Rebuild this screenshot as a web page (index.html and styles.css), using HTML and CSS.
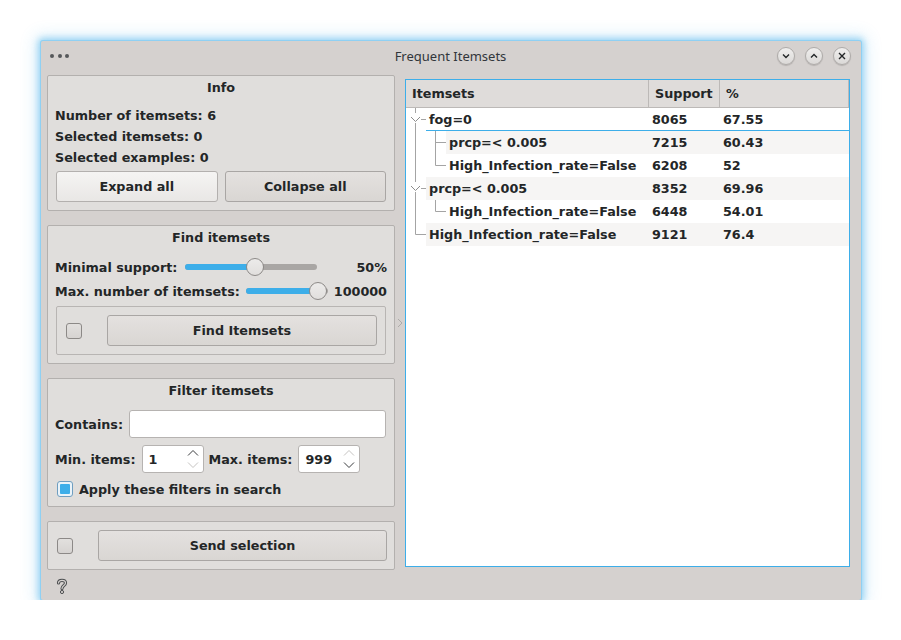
FILE: index.html
```html
<!DOCTYPE html>
<html>
<head>
<meta charset="utf-8">
<link rel="stylesheet" href="styles.css">
</head>
<body>
<div class="window">
  <div class="titlebar">
    <div class="dots"><span></span><span></span><span></span></div>
    <div class="title">Frequent Itemsets</div>
    <div class="wbtns">
      <div class="wbtn"><svg width="10" height="10" viewBox="0 0 10 10"><polyline points="2,3.5 5,6.5 8,3.5" fill="none" stroke="#232627" stroke-width="1.4"/></svg></div>
      <div class="wbtn"><svg width="10" height="10" viewBox="0 0 10 10"><polyline points="2,6.5 5,3.5 8,6.5" fill="none" stroke="#232627" stroke-width="1.4"/></svg></div>
      <div class="wbtn"><svg width="10" height="10" viewBox="0 0 10 10"><path d="M2 2 L8 8 M8 2 L2 8" fill="none" stroke="#232627" stroke-width="1.4"/></svg></div>
    </div>
  </div>
  <div class="content">
    <div class="left">
      <section class="group info">
        <div class="gtitle">Info</div>
        <div class="lines">
          <div class="line">Number of itemsets: 6</div>
          <div class="line">Selected itemsets: 0</div>
          <div class="line">Selected examples: 0</div>
        </div>
        <div class="btnrow">
          <div class="btn light">Expand all</div>
          <div class="btn">Collapse all</div>
        </div>
      </section>

      <section class="group find">
        <div class="gtitle">Find itemsets</div>
        <div class="srow">
          <span class="slabel">Minimal support:</span>
          <div class="slider s1">
            <div class="groove"><div class="fill" style="width:70px"></div></div>
            <div class="handle" style="left:61px"></div>
          </div>
          <span class="sval">50%</span>
        </div>
        <div class="srow">
          <span class="slabel">Max. number of itemsets:</span>
          <div class="slider s2">
            <div class="groove"><div class="fill" style="width:72px"></div></div>
            <div class="handle" style="left:63px"></div>
          </div>
          <span class="sval">100000</span>
        </div>
        <div class="frame">
          <div class="check"></div>
          <div class="btn grow">Find Itemsets</div>
        </div>
      </section>

      <section class="group filter">
        <div class="gtitle">Filter itemsets</div>
        <div class="frow">
          <span class="flabel">Contains:</span>
          <div class="input grow"></div>
        </div>
        <div class="frow second">
          <span class="flabel">Min. items:</span>
          <div class="spin">
            <span>1</span>
            <svg class="arrows" width="12" height="20" viewBox="0 0 12 20"><polyline points="1,6.5 6,1.5 11,6.5" fill="none" stroke="#3a3c3e" stroke-width="1"/><polyline points="1,13.5 6,18.5 11,13.5" fill="none" stroke="#c6c4c2" stroke-width="1"/></svg>
          </div>
          <span class="flabel gapl">Max. items:</span>
          <div class="spin">
            <span>999</span>
            <svg class="arrows" width="12" height="20" viewBox="0 0 12 20"><polyline points="1,6.5 6,1.5 11,6.5" fill="none" stroke="#c6c4c2" stroke-width="1"/><polyline points="1,13.5 6,18.5 11,13.5" fill="none" stroke="#3a3c3e" stroke-width="1"/></svg>
          </div>
        </div>
        <div class="crow">
          <div class="check checked"><div class="tick"></div></div>
          <span>Apply these filters in search</span>
        </div>
      </section>

      <section class="group send">
        <div class="check"></div>
        <div class="btn grow">Send selection</div>
      </section>

      <div class="helprow">
        <svg width="14" height="16" viewBox="0 0 14 16">
          <path d="M3.5 5 C3.5 1.5 10.5 1.5 10.5 5 C10.5 7.5 7 7.5 7 10.5" fill="none" stroke="#4d4f51" stroke-width="3.2" stroke-linecap="round"/>
          <path d="M3.5 5 C3.5 1.5 10.5 1.5 10.5 5 C10.5 7.5 7 7.5 7 10.5" fill="none" stroke="#d5d1cf" stroke-width="1.2" stroke-linecap="round"/>
          <circle cx="7" cy="14" r="1.6" fill="none" stroke="#4d4f51" stroke-width="1"/>
        </svg>
      </div>
    </div>

    <div class="splitter">
      <svg width="6" height="10" viewBox="0 0 6 10"><polyline points="1,1 5,5 1,9" fill="none" stroke="#aeaba9" stroke-width="1"/></svg>
    </div>

    <div class="tree">
      <div class="thead">
        <div class="th c1">Itemsets</div>
        <div class="th c2">Support</div>
        <div class="th c3">%</div>
      </div>
      <div class="tbody">
        <div class="row">
          <svg class="br0" width="20" height="23" viewBox="0 0 20 23"><path d="M9.5 0 V5 M9.5 15 V23 M15 11.5 H20" stroke="#a4a4a4" stroke-width="1" fill="none"/><polyline points="5,9 9.5,13.5 14,9" fill="none" stroke="#8c8c8c" stroke-width="1"/></svg>
          <div class="cells root current"><span class="name">fog=0</span><span class="num">8065</span><span class="num">67.55</span></div>
        </div>
        <div class="row">
          <svg class="br1" width="40" height="23" viewBox="0 0 40 23"><path d="M9.5 0 V23 M29.5 0 V23 M29.5 11.5 H40" stroke="#a4a4a4" stroke-width="1" fill="none"/></svg>
          <div class="cells child alt"><span class="name">prcp=&lt; 0.005</span><span class="num">7215</span><span class="num">60.43</span></div>
        </div>
        <div class="row">
          <svg class="br1" width="40" height="23" viewBox="0 0 40 23"><path d="M9.5 0 V23 M29.5 0 V11.5 H40" stroke="#a4a4a4" stroke-width="1" fill="none"/></svg>
          <div class="cells child"><span class="name">High_Infection_rate=False</span><span class="num">6208</span><span class="num">52</span></div>
        </div>
        <div class="row">
          <svg class="br0" width="20" height="23" viewBox="0 0 20 23"><path d="M9.5 0 V5 M9.5 15 V23 M15 11.5 H20" stroke="#a4a4a4" stroke-width="1" fill="none"/><polyline points="5,9 9.5,13.5 14,9" fill="none" stroke="#8c8c8c" stroke-width="1"/></svg>
          <div class="cells root alt"><span class="name">prcp=&lt; 0.005</span><span class="num">8352</span><span class="num">69.96</span></div>
        </div>
        <div class="row">
          <svg class="br1" width="40" height="23" viewBox="0 0 40 23"><path d="M9.5 0 V23 M29.5 0 V11.5 H40" stroke="#a4a4a4" stroke-width="1" fill="none"/></svg>
          <div class="cells child"><span class="name">High_Infection_rate=False</span><span class="num">6448</span><span class="num">54.01</span></div>
        </div>
        <div class="row">
          <svg class="br0" width="20" height="23" viewBox="0 0 20 23"><path d="M9.5 0 V11.5 H20" stroke="#a4a4a4" stroke-width="1" fill="none"/></svg>
          <div class="cells root alt"><span class="name">High_Infection_rate=False</span><span class="num">9121</span><span class="num">76.4</span></div>
        </div>
      </div>
    </div>
  </div>
</div>
</body>
</html>
```

FILE: styles.css
```css
* { box-sizing: border-box; }
html, body { margin: 0; padding: 0; background: #ffffff; }
body {
  padding: 41px 0 0 41px;
  font-family: "DejaVu Sans", sans-serif;
  font-size: 12.75px;
  font-weight: bold;
  color: #232627;
}
.window {
  width: 820px;
  height: 559px;
  background: #d5d1cf;
  border-radius: 2px;
  box-shadow: 0 0 0 1px #8fd0f3, 0 0 6px 3px rgba(61, 174, 233, 0.45), 0 0 16px 6px rgba(61, 174, 233, 0.18);
  display: flex;
  flex-direction: column;
}
.titlebar {
  flex: none;
  height: 34px;
  display: grid;
  grid-template-columns: 1fr auto 1fr;
  align-items: center;
  padding: 0 10px 4px 9px;
}
.dots { display: flex; gap: 3.5px; }
.dots span { width: 4px; height: 4px; border-radius: 50%; background: #55585a; }
.title {
  font-family: "Noto Sans", sans-serif;
  font-weight: normal;
  font-size: 13px;
  color: #31363b;
}
.wbtns { display: flex; justify-content: flex-end; gap: 10px; }
.wbtn {
  width: 18px; height: 18px; border-radius: 50%;
  background: linear-gradient(#f0efee, #dbd9d7);
  border: 1px solid #aeaba9;
  box-shadow: 0 1px 1px rgba(0,0,0,0.15);
  display: flex; align-items: center; justify-content: center;
}
.content {
  flex: 1;
  min-height: 0;
  display: flex;
  padding: 0 11px 0 6px;
}
.left { flex: none; width: 348px; display: flex; flex-direction: column; gap: 14px; }
.group {
  flex: none;
  background: #e0dedc;
  border: 1px solid #b3b0ae;
  border-radius: 2px;
  padding: 0 7px;
}
.gtitle { height: 24px; line-height: 24px; text-align: center; }
.info { height: 136px; }
.lines { margin-top: 5px; }
.line { height: 21px; line-height: 21px; }
.btnrow { display: flex; gap: 7px; margin: 3px 1px 0 1px; }
.btn {
  flex: 1;
  height: 31px;
  line-height: 29px;
  text-align: center;
  border: 1px solid #a9a6a4;
  border-radius: 3px;
  background: linear-gradient(#e4e1df, #d9d6d3);
}
.btn.light { background: linear-gradient(#f5f4f3, #e9e7e5); border-color: #b3b0ae; }
.grow { flex: 1; }

.find { height: 139px; }
.srow { height: 24px; display: flex; align-items: center; }
.find .gtitle + .srow { margin-top: 5px; }
.slabel { flex: none; }
.slider { position: relative; height: 24px; margin-left: 6px; flex: none; }
.s1 { width: 132px; margin-left: 8px; }
.s2 { width: 82px; }
.groove {
  position: absolute; left: 0; right: 0; top: 9px; height: 6px;
  background: #a9a6a4; border-radius: 3px; overflow: hidden;
}
.fill { height: 100%; background: #3daee9; }
.handle {
  position: absolute; top: 3px; width: 18px; height: 18px; border-radius: 50%;
  background: linear-gradient(#ecebea, #e1dfdd);
  border: 1px solid #8d8a88;
}
.sval { flex: 1; text-align: right; margin-left: 5px; }
.frame {
  margin: 3px 1px 0 1px;
  height: 49px;
  border: 1px solid #b8b5b3;
  border-radius: 2px;
  display: flex;
  align-items: center;
  padding: 0 8px 0 9px;
}
.check {
  flex: none;
  width: 16px; height: 16px;
  border: 1px solid #8c8987;
  border-radius: 3px;
  background: linear-gradient(#e2e0de, #d6d3d1);
}
.frame .check { margin-right: 25px; }
.check.checked {
  border-color: #6f9ec0;
  background: #eaf3f9;
  padding: 2px;
}
.tick { width: 100%; height: 100%; background: #3daee9; border-radius: 1px; }

.filter { height: 129px; }
.frow { display: flex; align-items: center; height: 28px; margin-top: 7px; }
.flabel { flex: none; margin-right: 6px; }
.gapl { margin-left: 5px; }
.input {
  height: 28px; background: #ffffff; border: 1px solid #b6b3b1; border-radius: 3px; margin-right: 1px;
}
.spin {
  flex: none;
  width: 62px; height: 28px; background: #ffffff; border: 1px solid #b6b3b1; border-radius: 3px;
  display: flex; align-items: center; justify-content: space-between; padding: 0 4px 0 6px;
}
.crow { display: flex; align-items: center; height: 16px; margin-top: 8px; padding-left: 2px; gap: 6px; }

.send { height: 49px; display: flex; align-items: center; padding: 0 7px 0 9px; }
.send .check { margin-right: 25px; }

.helprow { flex: none; height: 30px; margin-top: -14px; padding: 8px 0 0 8px; }

.splitter { flex: none; width: 10px; display: flex; align-items: center; justify-content: center; padding-bottom: 30px; }

.tree {
  flex: none;
  width: 445px;
  height: 488px;
  margin-top: 4px;
  background: #ffffff;
  border: 1px solid #3daee9;
  display: flex;
  flex-direction: column;
}
.thead {
  flex: none;
  display: flex;
  height: 28px;
  background: #dfdcda;
  border-bottom: 1px solid #bcb9b7;
}
.th { height: 27px; line-height: 27px; padding-left: 6px; border-right: 1px solid #bcb9b7; }
.th.c1 { width: 243px; }
.th.c2 { width: 71px; }
.th.c3 { width: 129px; }
.row { display: flex; height: 23px; }
.row svg { flex: none; display: block; }
.cells { flex: 1; display: grid; align-items: center; line-height: 23px; }
.cells.root { grid-template-columns: 223px 71px 1fr; }
.cells.child { grid-template-columns: 203px 71px 1fr; }
.cells.alt { background: #f6f5f4; }
.cells.current { box-shadow: inset 0 -1px 0 #3daee9; }
.cells span { padding-left: 3px; white-space: nowrap; }
```
